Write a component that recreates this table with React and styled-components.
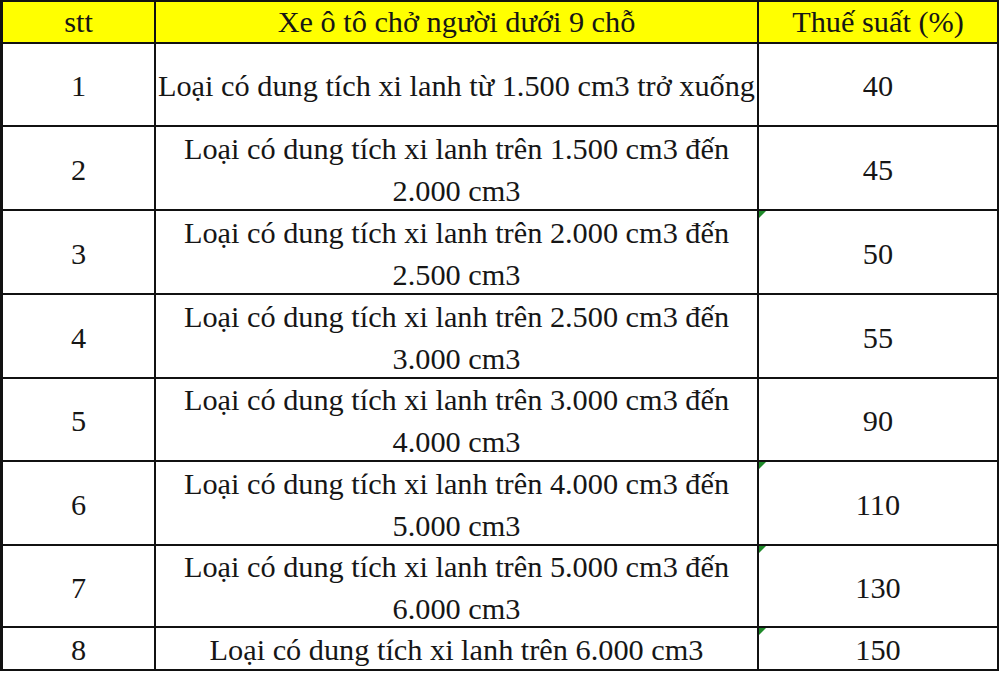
import React from "react";
import styled, { createGlobalStyle } from "styled-components";

const Global = createGlobalStyle`
  html, body { margin: 0; padding: 0; background: #ffffff; }
  body { font-family: "Liberation Serif", "Times New Roman", serif; }
`;

const Grid = styled.div`
  display: grid;
  width: 994px;
  grid-template-columns: 151px 601px 238px;
  grid-template-rows: 40px 81px 82px 82px 82px 81px 82px 80px 41px;
  gap: 2px;
  background: #111;
  border-style: solid;
  border-color: #111;
  border-width: 2px 2px 2px 3px;
`;

const Cell = styled.div`
  position: relative;
  display: flex;
  align-items: center;
  justify-content: center;
  text-align: center;
  background: ${(p) => (p.$head ? "#ffff00" : "#ffffff")};
  color: #161616;
  font-family: "Liberation Serif", "Times New Roman", serif;
  font-size: 30.3px;
  line-height: 42px;
  padding: 0 ${(p) => (p.$wide ? "0" : "2px")};
  padding-top: ${(p) => (p.$head ? "0" : "3px")};
  overflow: hidden;
  white-space: ${(p) => (p.$wide ? "normal" : "nowrap")};
  ${(p) =>
    p.$mark
      ? `&::before {
    content: "";
    position: absolute;
    left: 0;
    top: 0;
    border-style: solid;
    border-width: 7px 7px 0 0;
    border-color: #1f8a2a transparent transparent transparent;
  }`
      : ""}
`;

const rows = [
  ["1", "Loại có dung tích xi lanh từ 1.500 cm3 trở xuống", "40", false],
  ["2", "Loại có dung tích xi lanh trên 1.500 cm3 đến 2.000 cm3", "45", false],
  ["3", "Loại có dung tích xi lanh trên 2.000 cm3 đến 2.500 cm3", "50", true],
  ["4", "Loại có dung tích xi lanh trên 2.500 cm3 đến 3.000 cm3", "55", false],
  ["5", "Loại có dung tích xi lanh trên 3.000 cm3 đến 4.000 cm3", "90", false],
  ["6", "Loại có dung tích xi lanh trên 4.000 cm3 đến 5.000 cm3", "110", true],
  ["7", "Loại có dung tích xi lanh trên 5.000 cm3 đến 6.000 cm3", "130", true],
  ["8", "Loại có dung tích xi lanh trên 6.000 cm3", "150", true],
];

export default function App() {
  return (
    <>
      <Global />
      <Grid>
        <Cell $head>stt</Cell>
        <Cell $head $wide>Xe ô tô chở người dưới 9 chỗ</Cell>
        <Cell $head>Thuế suất (%)</Cell>
        {rows.map(([n, d, t, m]) => (
          <React.Fragment key={n}>
            <Cell>{n}</Cell>
            <Cell $wide>{d}</Cell>
            <Cell $mark={m}>{t}</Cell>
          </React.Fragment>
        ))}
      </Grid>
    </>
  );
}
